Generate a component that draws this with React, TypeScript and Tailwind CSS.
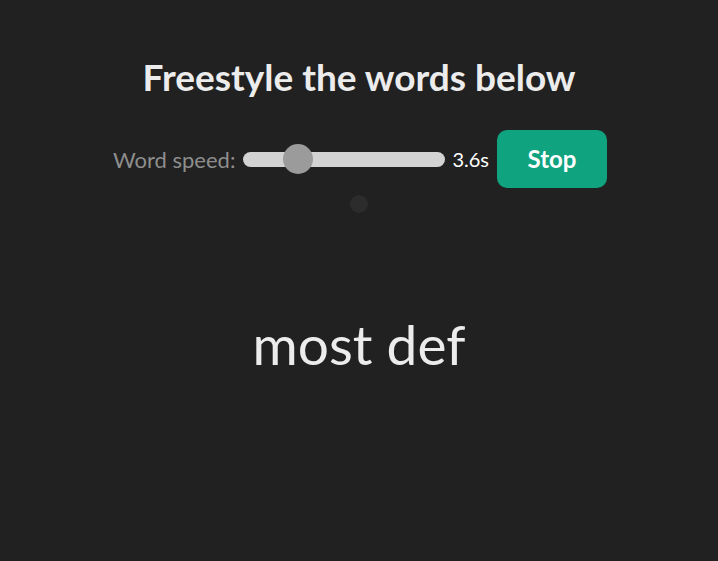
import React from "react";

export default function App() {
  return (
    <div
      className="w-[718px] h-[561px] bg-[#212121] flex flex-col items-center"
      style={{ fontFamily: "Lato, 'Open Sans', sans-serif" }}
    >
      <h1 className="mt-[54px] text-[37px] leading-[46px] font-bold text-[#ececec]">
        Freestyle the words below
      </h1>
      <div className="mt-[30px] flex items-center h-[58px] pl-[2px]">
        <span className="text-[22px] text-[#8e8e8e] mr-[8px]">Word speed:</span>
        <div className="relative w-[202px] h-[15px] rounded-full bg-[#d3d3d3]">
          <div className="absolute left-[40px] top-[-8px] w-[30px] h-[30px] rounded-full bg-[#9b9b9b]" />
        </div>
        <span className="ml-[7px] text-[20px] text-white">3.6s</span>
        <button className="ml-[8px] w-[110px] h-[58px] rounded-[10px] bg-[#10a37f] text-white text-[24px] font-bold">
          Stop
        </button>
      </div>
      <div className="mt-[7px] w-[18px] h-[18px] rounded-full bg-[#2c2c2c]" />
      <div className="mt-[99px] text-[55px] text-[#ececec] leading-[64px]">most def</div>
    </div>
  );
}
